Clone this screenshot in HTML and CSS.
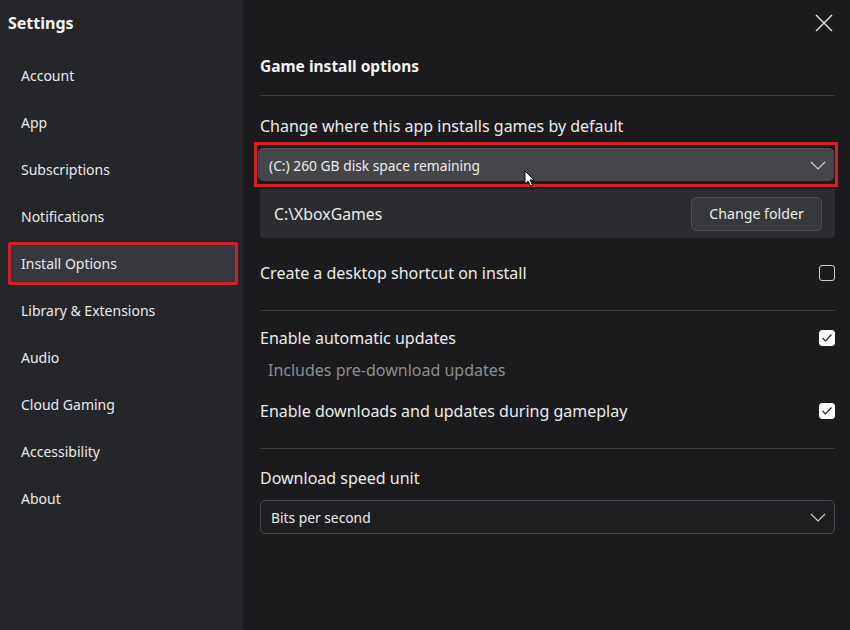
FILE: index.html
```html
<!DOCTYPE html>
<html lang="en">
<head>
    <meta charset="UTF-8">
    <title>Settings</title>
    <link rel="stylesheet" href="styles.css">
</head>
<body>
    <div class="window">
        <aside class="sidebar">
            <h1>Settings</h1>
            <nav class="nav">
                <a class="nav-item">Account</a>
                <a class="nav-item">App</a>
                <a class="nav-item">Subscriptions</a>
                <a class="nav-item">Notifications</a>
                <a class="nav-item active">Install Options</a>
                <a class="nav-item">Library &amp; Extensions</a>
                <a class="nav-item">Audio</a>
                <a class="nav-item">Cloud Gaming</a>
                <a class="nav-item">Accessibility</a>
                <a class="nav-item">About</a>
            </nav>
        </aside>

        <main class="content">
            <div class="topbar">
                <svg class="close" width="18" height="18" viewBox="0 0 18 18">
                    <path d="M1 1 L17 17 M17 1 L1 17" stroke="#e6e6e6" stroke-width="1.4" fill="none"/>
                </svg>
            </div>

            <h2 class="section-title">Game install options</h2>
            <hr class="divider first">

            <p class="label">Change where this app installs games by default</p>
            <div class="highlight">
                <div class="select filled">
                    <span>(C:) 260 GB disk space remaining</span>
                    <svg class="chevron" width="16" height="9" viewBox="0 0 16 9"><path d="M1 1 L8 8 L15 1" stroke="#cfcfcf" stroke-width="1.2" fill="none"/></svg>
                </div>
                <svg class="cursor" width="11" height="17" viewBox="0 0 11 17"><path d="M1 1 L1 14 L4 11 L6.5 16 L8.5 15 L6 10 L10 10 Z" fill="#fff" stroke="#111" stroke-width="1"/></svg>
            </div>
            <div class="folder-row">
                <span>C:\XboxGames</span>
                <button class="btn">Change folder</button>
            </div>

            <div class="row shortcut">
                <span>Create a desktop shortcut on install</span>
                <span class="checkbox"></span>
            </div>
            <hr class="divider second">

            <div class="row auto-updates">
                <span>Enable automatic updates</span>
                <span class="checkbox checked"><svg width="12" height="10" viewBox="0 0 12 10"><path d="M1.5 5 L4.5 8 L10.5 1.5" stroke="#222" stroke-width="1.2" fill="none"/></svg></span>
            </div>
            <p class="hint">Includes pre-download updates</p>
            <div class="row gameplay">
                <span>Enable downloads and updates during gameplay</span>
                <span class="checkbox checked"><svg width="12" height="10" viewBox="0 0 12 10"><path d="M1.5 5 L4.5 8 L10.5 1.5" stroke="#222" stroke-width="1.2" fill="none"/></svg></span>
            </div>
            <hr class="divider third">

            <p class="label speed">Download speed unit</p>
            <div class="select outline">
                <span>Bits per second</span>
                <svg class="chevron" width="16" height="9" viewBox="0 0 16 9"><path d="M1 1 L8 8 L15 1" stroke="#cfcfcf" stroke-width="1.2" fill="none"/></svg>
            </div>
        </main>
    </div>
</body>
</html>
```

FILE: styles.css
```css
* {
    box-sizing: border-box;
}
body {
    margin: 0;
    font-family: "Noto Sans", "Open Sans", sans-serif;
    color: #ececec;
    background: #1b1b1d;
}
.window {
    display: flex;
    width: 850px;
    height: 630px;
    overflow: hidden;
}

/* sidebar */
.sidebar {
    width: 243px;
    flex-shrink: 0;
    background: #25262a;
    padding: 11px 5px 0 8px;
}
.sidebar h1 {
    margin: 0;
    font-size: 16px;
    line-height: 24px;
    font-weight: 700;
    color: #f4f4f4;
}
.nav {
    display: flex;
    flex-direction: column;
    margin-top: 17px;
}
.nav-item {
    display: flex;
    align-items: center;
    height: 47px;
    padding-left: 13px;
    font-size: 14px;
    color: #eaeaea;
}
.nav-item.active {
    height: 43px;
    margin: 2px 0;
    padding-left: 10px;
    background: #36383e;
    border: 3px solid #d21f2d;
    border-radius: 2px;
}

/* content */
.content {
    flex: 1;
    padding: 0 15px 0 17px;
}
.topbar {
    display: flex;
    justify-content: flex-end;
    height: 44px;
    padding-top: 14px;
    margin-right: 2px;
}
.section-title {
    margin: 11px 0 0;
    font-size: 15.5px;
    line-height: 22px;
    font-weight: 700;
    color: #f2f2f2;
}
.divider {
    border: none;
    height: 1px;
    background: #3c3c3f;
    margin: 0;
}
.divider.first { margin-top: 18px; }
.divider.second { margin-top: 26px; }
.divider.third { margin-top: 26px; }

.label {
    margin: 19px 0 0;
    font-size: 16px;
    line-height: 22px;
}
.label.speed {
    margin-top: 18px;
}

.highlight {
    position: relative;
    margin: 5px -3px 0 -6px;
    padding: 3px 1px;
    border: 3px solid #d21f2d;
}
.select {
    display: flex;
    align-items: center;
    justify-content: space-between;
    height: 33px;
    padding: 0 8px 0 11px;
    border-radius: 5px;
    font-size: 13.8px;
}
.select.filled {
    background: #45464a;
    border-top: 1px solid #505155;
}
.select.outline {
    height: 34px;
    margin-top: 11px;
    padding-left: 10px;
    background: #1e1e21;
    border: 1px solid #46474b;
}
.cursor {
    position: absolute;
    left: 267px;
    top: 25px;
}

.folder-row {
    display: flex;
    align-items: center;
    justify-content: space-between;
    height: 49px;
    margin-top: 2px;
    padding: 0 13px 0 14px;
    background: #2b2c2f;
    border-radius: 0 0 4px 4px;
    font-size: 15.8px;
}
.btn {
    height: 34px;
    width: 131px;
    background: #37383c;
    border: 1px solid #4a4b4f;
    border-radius: 5px;
    color: #ececec;
    font-family: inherit;
    font-size: 14.2px;
}

.row {
    display: flex;
    align-items: center;
    justify-content: space-between;
    height: 22px;
    font-size: 16px;
}
.row.shortcut { margin-top: 24px; }
.row.auto-updates { margin-top: 16px; }
.row.gameplay { margin-top: 19px; }

.checkbox {
    display: flex;
    align-items: center;
    justify-content: center;
    width: 16px;
    height: 16px;
    border: 1.5px solid #cfcfcf;
    border-radius: 3px;
}
.checkbox.checked {
    background: #fafafa;
    border-color: #fafafa;
}
.hint {
    margin: 10px 0 0 8px;
    font-size: 16px;
    line-height: 22px;
    color: #8d8d90;
}
```
